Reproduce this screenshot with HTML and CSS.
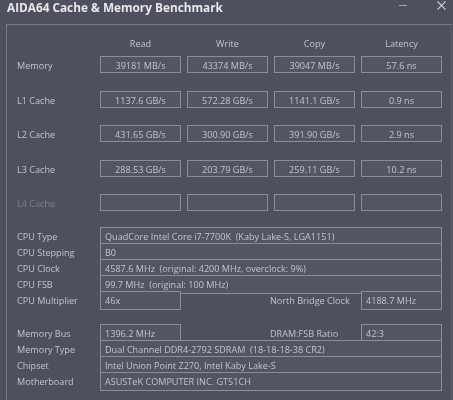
FILE: index.html
```html
<!DOCTYPE html>
<html lang="en">
<head>
    <meta charset="UTF-8">
    <meta name="viewport" content="width=device-width, initial-scale=1.0">
    <title>AIDA64 Cache &amp; Memory Benchmark</title>
    <link rel="stylesheet" href="styles.css">
</head>
<body>
    <div class="window">
        <div class="title-bar">
            <span class="title">AIDA64 Cache &amp; Memory Benchmark</span>
            <div class="window-buttons">
                <span class="minimize"></span>
                <svg class="close" width="9" height="9" viewBox="0 0 10 10">
                    <path d="M0.5 0.5L9.5 9.5M9.5 0.5L0.5 9.5" stroke="#d3d5db" stroke-width="1.2" fill="none"/>
                </svg>
            </div>
        </div>

        <div class="panel">
            <!-- Benchmark results -->
            <div class="bench-head">
                <span></span>
                <span>Read</span>
                <span>Write</span>
                <span>Copy</span>
                <span>Latency</span>
            </div>
            <div class="bench-row">
                <span class="label">Memory</span>
                <span class="cell">39181 MB/s</span>
                <span class="cell">43374 MB/s</span>
                <span class="cell">39047 MB/s</span>
                <span class="cell">57.6 ns</span>
            </div>
            <div class="bench-row">
                <span class="label">L1 Cache</span>
                <span class="cell">1137.6 GB/s</span>
                <span class="cell">572.28 GB/s</span>
                <span class="cell">1141.1 GB/s</span>
                <span class="cell">0.9 ns</span>
            </div>
            <div class="bench-row">
                <span class="label">L2 Cache</span>
                <span class="cell">431.65 GB/s</span>
                <span class="cell">300.90 GB/s</span>
                <span class="cell">391.90 GB/s</span>
                <span class="cell">2.9 ns</span>
            </div>
            <div class="bench-row">
                <span class="label">L3 Cache</span>
                <span class="cell">288.53 GB/s</span>
                <span class="cell">203.79 GB/s</span>
                <span class="cell">259.11 GB/s</span>
                <span class="cell">10.2 ns</span>
            </div>
            <div class="bench-row last">
                <span class="label disabled">L4 Cache</span>
                <span class="cell"></span>
                <span class="cell"></span>
                <span class="cell"></span>
                <span class="cell"></span>
            </div>

            <!-- CPU info -->
            <div class="info-group cpu-group">
                <div class="info-row">
                    <span class="label">CPU Type</span>
                    <span class="field wide">QuadCore Intel Core i7-7700K&nbsp; (Kaby Lake-S, LGA1151)</span>
                </div>
                <div class="info-row">
                    <span class="label">CPU Stepping</span>
                    <span class="field wide">B0</span>
                </div>
                <div class="info-row">
                    <span class="label">CPU Clock</span>
                    <span class="field wide">4587.6 MHz&nbsp; (original: 4200 MHz, overclock: 9%)</span>
                </div>
                <div class="info-row">
                    <span class="label">CPU FSB</span>
                    <span class="field wide">99.7 MHz&nbsp; (original: 100 MHz)</span>
                </div>
                <div class="info-row">
                    <span class="label">CPU Multiplier</span>
                    <span class="field">46x</span>
                    <span class="side-label">North Bridge Clock</span>
                    <span class="field">4188.7 MHz</span>
                </div>
            </div>

            <!-- Board info -->
            <div class="info-group">
                <div class="info-row">
                    <span class="label">Memory Bus</span>
                    <span class="field">1396.2 MHz</span>
                    <span class="side-label">DRAM:FSB Ratio</span>
                    <span class="field">42:3</span>
                </div>
                <div class="info-row">
                    <span class="label">Memory Type</span>
                    <span class="field wide">Dual Channel DDR4-2792 SDRAM&nbsp; (18-18-18-38 CR2)</span>
                </div>
                <div class="info-row">
                    <span class="label">Chipset</span>
                    <span class="field wide">Intel Union Point Z270, Intel Kaby Lake-S</span>
                </div>
                <div class="info-row">
                    <span class="label">Motherboard</span>
                    <span class="field wide">ASUSTeK COMPUTER INC. GT51CH</span>
                </div>
            </div>
        </div>
    </div>
</body>
</html>
```

FILE: styles.css
```css
* {
    box-sizing: border-box;
}

html,
body {
    height: 100%;
}

body {
    margin: 0;
    overflow: hidden;
    background-color: #4e515d;
    color: #c2c5cc;
    font-family: "Open Sans", "Noto Sans", sans-serif;
    font-size: 9.1px;
}

/* the reference is a soft, recompressed photo */
.window {
    display: flex;
    flex-direction: column;
    height: 400px;
    padding-left: 6px;
    filter: blur(0.35px);
}

.title-bar {
    display: flex;
    justify-content: space-between;
    align-items: flex-start;
    height: 18px;
    margin-left: 1px;
    padding-right: 7px;
}

.title {
    color: #e6e8ec;
    font-size: 11.8px;
    font-weight: 700;
    line-height: 15px;
}

.window-buttons {
    display: flex;
    align-items: center;
    gap: 30px;
    padding-top: 1px;
}

.minimize {
    width: 8px;
    height: 1px;
    background-color: #a4a7af;
}

.panel {
    flex: 1;
    margin-top: 6px;
    margin-right: 1px;
    padding: 0 0 0 10px;
    border: 1px solid #777b86;
    border-right-color: #5c606b;
    border-bottom: none;
}

.bench-head,
.bench-row {
    display: grid;
    grid-template-columns: 77px 81px 81px 81px 81px;
    column-gap: 6px;
}

.bench-head {
    height: 31px;
    padding-top: 12px;
    line-height: 14px;
    text-align: center;
}

.bench-row {
    align-items: center;
    height: 17px;
    margin-bottom: 17.5px;
}

.bench-row.last {
    margin-bottom: 16px;
}

.label {
    padding-top: 2px;
    white-space: nowrap;
}

.label.disabled {
    color: #7d818c;
}

.cell {
    height: 17px;
    border: 1px solid #8a8e98;
    background-color: #525662;
    line-height: 17px;
    text-align: center;
    white-space: nowrap;
}

.info-group {
    display: flex;
    flex-direction: column;
}

.cpu-group {
    margin-bottom: 17px;
}

.info-row {
    display: grid;
    grid-template-columns: 83px 81px 180px 81px;
    height: 16px;
    align-items: stretch;
    line-height: 15px;
}

.info-row .label {
    align-self: center;
    padding-top: 0;
}

.field {
    margin-bottom: -1px;
    padding-left: 4px;
    border: 1px solid #8a8e98;
    background-color: #525662;
    line-height: 17px;
    white-space: nowrap;
}

.field.wide {
    grid-column: 2 / 5;
}

.side-label {
    align-self: center;
    padding-left: 89px;
    white-space: nowrap;
}
```
